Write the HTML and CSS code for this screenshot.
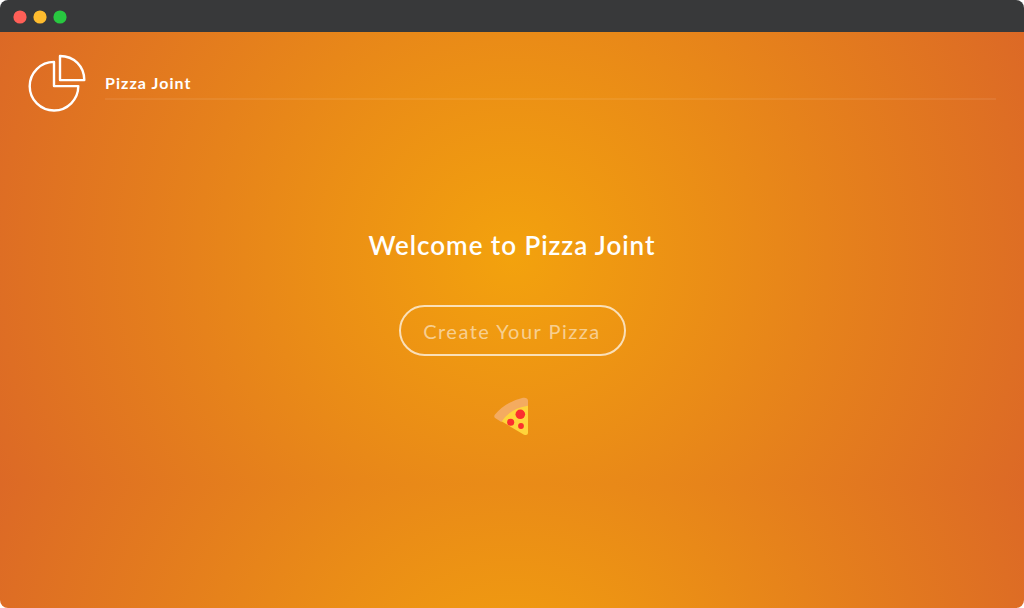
FILE: index.html
```
<!DOCTYPE html>
<html lang="en">
<head>
<meta charset="utf-8">
<title>Pizza Joint</title>
<link rel="stylesheet" href="styles.css">
</head>
<body>
<div class="window">
  <div class="titlebar">
    <svg class="dots" viewBox="0 0 60 14">
      <circle cx="7" cy="7" r="6.6" fill="#ff5f57"/>
      <circle cx="27" cy="7" r="6.6" fill="#febc2e"/>
      <circle cx="47" cy="7" r="6.6" fill="#28c840"/>
    </svg>
  </div>
  <div class="app">
    <header class="header">
      <svg class="logo" viewBox="0 0 60 60" fill="none" stroke="#fff" stroke-width="2.4" stroke-linejoin="round" stroke-linecap="round">
        <path d="M27 9.9A24.3 24.3 0 1 0 51.3 34.1H27Z"/>
        <path d="M33 4V28.1H57.3C57.3 14.3 47 4 33 4Z"/>
      </svg>
      <div class="title"><h1>Pizza Joint</h1></div>
    </header>
    <main class="home">
      <h2>Welcome to Pizza Joint</h2>
      <button class="create">Create Your Pizza</button>
      <svg class="slice" viewBox="0 0 40 44">
        <path d="M8 27Q17 12 35 10V39Q34.8 42 31 40.7Z" fill="#ffd43b"/>
        <path d="M35 11.8V6.5Q34.5 3.2 30 3.8Q12 8 1.8 20.8Q0.5 23 2.5 24.3L8.3 28Q17 14.5 35 11.8Z" fill="#f4ab60"/>
        <circle cx="27.3" cy="20.3" r="4.8" fill="#fb2f2f"/>
        <circle cx="17.7" cy="28.3" r="3.5" fill="#fb2f2f"/>
        <circle cx="28" cy="32" r="2.9" fill="#fb2f2f"/>
      </svg>
    </main>
  </div>
</div>
</body>
</html>
```
FILE: styles.css
```
body {
  margin: 0;
  background: #fff;
  font-family: Lato, sans-serif;
  color: #fff;
}
.window {
  height: 608px;
  display: flex;
  flex-direction: column;
  overflow: hidden;
  border-radius: 8px;
}
.titlebar {
  height: 32px;
  flex: none;
  box-sizing: border-box;
  padding: 10px 0 0 13px;
  display: flex;
  align-items: flex-start;
  background: #38393a;
}
.dots {
  width: 60px;
  height: 14px;
}
.app {
  flex: 1;
  background: radial-gradient(circle, #f3a20d, #dc6926) 0 0 / 100% 452px;
}
.header {
  display: flex;
  padding: 20px 28px 0 27px;
}
.logo {
  width: 60px;
  height: 60px;
}
.title {
  flex: 1;
  height: 46px;
  margin-left: 18px;
  border-bottom: 2px solid rgba(255, 255, 255, 0.07);
  display: flex;
  align-items: flex-end;
}
.title h1 {
  margin: 0 0 5px;
  font-size: 16px;
  line-height: 20px;
  font-weight: 700;
  letter-spacing: 1.05px;
}
.home {
  display: flex;
  flex-direction: column;
  align-items: center;
}
.home h2 {
  margin: 115px 0 0;
  font-size: 26px;
  line-height: 36px;
  font-weight: 600;
  letter-spacing: 0.95px;
  white-space: nowrap;
}
.create {
  box-sizing: border-box;
  width: 227px;
  height: 51px;
  margin: 42px 0 0;
  padding: 0;
  border: 2px solid rgba(255, 255, 255, 0.7);
  border-radius: 26px;
  background: none;
  color: rgba(255, 255, 255, 0.55);
  font: 400 20px/46px Lato, sans-serif;
  letter-spacing: 1.5px;
  white-space: nowrap;
}
.slice {
  width: 40px;
  height: 44px;
  margin: 38px 0 0 1px;
}
```
